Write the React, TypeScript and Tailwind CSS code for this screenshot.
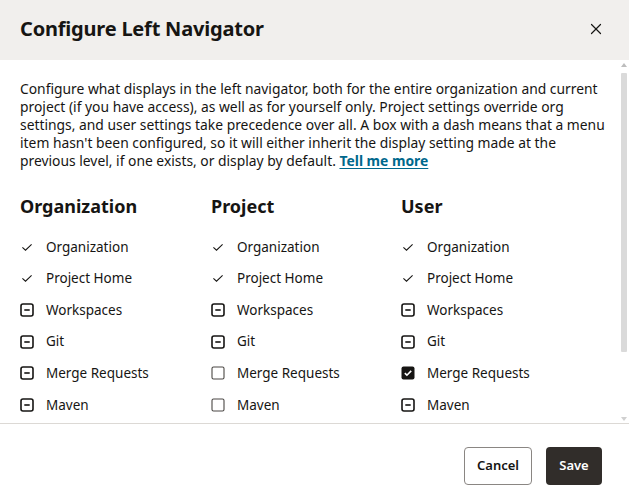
import { X } from 'lucide-react';

type State = 'check' | 'dash' | 'empty' | 'checked';

const items = ['Organization', 'Project Home', 'Workspaces', 'Git', 'Merge Requests', 'Maven', 'Builds', 'Environments', 'Issues'];

const columns: { title: string; states: State[] }[] = [
  { title: 'Organization', states: ['check', 'check', 'dash', 'dash', 'dash', 'dash', 'dash', 'dash', 'dash'] },
  { title: 'Project', states: ['check', 'check', 'dash', 'dash', 'empty', 'empty', 'dash', 'dash', 'dash'] },
  { title: 'User', states: ['check', 'check', 'dash', 'dash', 'checked', 'dash', 'dash', 'dash', 'dash'] },
];

function StateIcon({ state }: { state: State }) {
  if (state === 'check') {
    return (
      <svg width="14" height="14" viewBox="0 0 14 14" fill="none" stroke="#161513" strokeWidth="1.1">
        <path d="M2.4 7.4l3.1 2.8L11.6 4.4" />
      </svg>
    );
  }
  if (state === 'dash') {
    return (
      <svg width="14" height="14" viewBox="0 0 14 14" fill="none" stroke="#161513">
        <rect x="1" y="1" width="12" height="12" rx="2" strokeWidth="1.6" />
        <path d="M4.3 7h5.4" strokeWidth="1.6" />
      </svg>
    );
  }
  if (state === 'checked') {
    return (
      <svg width="14" height="14" viewBox="0 0 14 14">
        <rect x="0.5" y="0.5" width="13" height="13" rx="2" fill="#161513" />
        <path d="M3.8 7.2l2.1 2L10.2 4.9" fill="none" stroke="white" strokeWidth="1.6" />
      </svg>
    );
  }
  return (
    <svg width="14" height="14" viewBox="0 0 14 14" fill="none">
      <rect x="1" y="1" width="12" height="12" rx="1.5" stroke="#4a4744" strokeWidth="1.1" />
    </svg>
  );
}

export default function App() {
  return (
    <div className="w-[629px] h-[500px] bg-white flex flex-col text-[#161513] font-['Noto_Sans',sans-serif] overflow-hidden">
      <div className="h-[60px] shrink-0 bg-[#f1efed] flex items-center justify-between pl-5 pr-6 pb-[2px]">
        <h1 className="text-[20px] font-bold tracking-[-0.2px]">Configure Left Navigator</h1>
        <X className="w-[18px] h-[18px]" strokeWidth={1.6} />
      </div>

      <div className="flex-1 min-h-0 flex">
        <div className="flex-1 overflow-hidden pl-5">
          <p className="text-[13.85px] leading-[18px] pt-[20px] w-[590px]">
            Configure what displays in the left navigator, both for the entire organization and current project (if you
            have access), as well as for yourself only. Project settings override org settings, and user settings take
            precedence over all. A box with a dash means that a menu item hasn't been configured, so it will either
            inherit the display setting made at the previous level, if one exists, or display by default.{' '}
            <a className="font-bold text-[#00688c] underline underline-offset-2">Tell me more</a>
          </p>

          <div className="grid grid-cols-[191px_190px_1fr] mt-[24px] pb-4">
            {columns.map((col) => (
              <div key={col.title}>
                <h2 className="text-[18px] font-bold leading-[24px] mb-[13px]">{col.title}</h2>
                {items.map((item, i) => (
                  <div key={item} className="h-[31.6px] flex items-center gap-3">
                    <StateIcon state={col.states[i]} />
                    <span className="text-[13.5px]">{item}</span>
                  </div>
                ))}
              </div>
            ))}
          </div>
        </div>

        <div className="w-[9px] mr-[1px] flex flex-col items-center pt-[3px] pb-[2px]">
          <div className="w-0 h-0 border-x-[3px] border-x-transparent border-b-[4px] border-b-[#bdbdbd]" />
          <div className="w-[6px] h-[279px] mt-[6px] bg-[#dadada] rounded-[1px]" />
          <div className="flex-1" />
          <div className="w-0 h-0 border-x-[3px] border-x-transparent border-t-[4px] border-t-[#d0d0d0]" />
        </div>
      </div>

      <div className="h-[77px] shrink-0 border-t border-[#dcd9d5] flex items-start pt-[23px] justify-end gap-[14px] pr-[27px]">
        <button className="h-[38px] w-[68px] rounded-[4px] border border-[#8a8683] bg-white text-[13px] font-semibold">
          Cancel
        </button>
        <button className="h-[38px] w-[56px] rounded-[4px] bg-[#312d2a] text-white text-[13px] font-semibold">
          Save
        </button>
      </div>
    </div>
  );
}
